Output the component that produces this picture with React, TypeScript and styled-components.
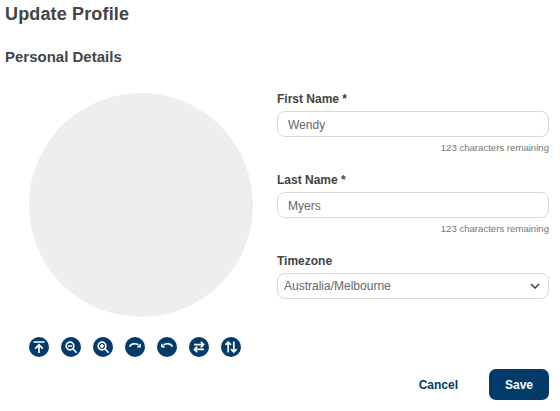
import React from "react";
import styled, { createGlobalStyle } from "styled-components";

const GlobalStyle = createGlobalStyle`
  html, body {
    margin: 0;
    padding: 0;
    background: #fff;
    font-family: "Liberation Sans", Arial, sans-serif;
  }
`;

const Page = styled.div`
  width: 560px;
  height: 411px;
  box-sizing: border-box;
  padding: 5px 11px 0 5px;
  overflow: hidden;
`;

const Title = styled.h1`
  margin: 0;
  font-size: 18px;
  line-height: 18px;
  font-weight: 700;
  letter-spacing: 0.15px;
  color: #444;
`;

const Subtitle = styled.h2`
  margin: 25px 0 0;
  font-size: 15px;
  line-height: 17px;
  font-weight: 700;
  color: #444;
`;

const Columns = styled.div`
  display: flex;
  margin-top: 27px;
`;

const AvatarColumn = styled.div`
  width: 272px;
  display: flex;
  flex-direction: column;
  align-items: flex-start;
  box-sizing: border-box;
  padding: 1px 0 0 24px;
`;

const Avatar = styled.div`
  width: 224px;
  height: 224px;
  border-radius: 50%;
  background: #eeeeee;
`;

const Tools = styled.div`
  display: flex;
  gap: 12px;
  margin-top: 20px;
`;

const ToolButton = styled.button`
  width: 20px;
  height: 20px;
  padding: 0;
  border: 0;
  border-radius: 50%;
  background: #023a69;
  display: flex;
  align-items: center;
  justify-content: center;
`;

const ToolIcon = styled.svg`
  width: 20px;
  height: 20px;
  fill: none;
  stroke: #fff;
  stroke-width: 1.7;
`;

const ArrowHead = styled.path`
  fill: #fff;
  stroke: none;
`;

const FormColumn = styled.div`
  flex: 1;
  display: flex;
  flex-direction: column;
`;

const Field = styled.div<{ $gap?: number }>`
  display: flex;
  flex-direction: column;
  margin-bottom: ${({ $gap }) => $gap ?? 0}px;
`;

const Label = styled.label`
  font-size: 12px;
  line-height: 14px;
  font-weight: 700;
  color: #444;
  margin-bottom: 5px;
`;

const TextInput = styled.input`
  box-sizing: border-box;
  width: 272px;
  height: 26px;
  padding: 2px 10px 0;
  border: 1px solid #d8d8d8;
  border-radius: 8px;
  background: #fff;
  font-family: inherit;
  font-size: 12px;
  color: #666;
  outline: none;
`;

const Helper = styled.div`
  margin-top: 5px;
  text-align: right;
  font-size: 9.6px;
  line-height: 11px;
  color: #777;
`;

const SelectBox = styled.div`
  box-sizing: border-box;
  width: 272px;
  height: 26px;
  padding: 0 8px 0 6px;
  border: 1px solid #d8d8d8;
  border-radius: 8px;
  background: #fff;
  display: flex;
  align-items: center;
  justify-content: space-between;
  font-size: 12px;
  color: #666;
`;

const Actions = styled.div`
  display: flex;
  justify-content: flex-end;
  align-items: center;
  gap: 31px;
  margin-top: 70px;
`;

const CancelButton = styled.button`
  padding: 0;
  border: 0;
  background: none;
  font-family: inherit;
  font-size: 12px;
  font-weight: 700;
  color: #023a69;
`;

const SaveButton = styled.button`
  width: 60px;
  height: 31px;
  padding: 0;
  border: 0;
  border-radius: 7px;
  background: #023a69;
  font-family: inherit;
  font-size: 12px;
  font-weight: 700;
  color: #fff;
`;

const tools: { line: string; head?: string }[] = [
  { line: "M4.5 5h11M10 16V8.5M6.2 11.6L10 7.8l3.8 3.8" },
  { line: "M9 5.2a3.8 3.8 0 1 1 0 7.6 3.8 3.8 0 0 1 0-7.6zM7 9h4M12 12l3.6 3.6" },
  { line: "M9 5.2a3.8 3.8 0 1 1 0 7.6 3.8 3.8 0 0 1 0-7.6zM7 9h4M9 7v4M12 12l3.6 3.6" },
  { line: "M4.5 9.6C6 6.8 10 5.8 13.4 7.8", head: "M15.8 6.2v4.2h-4.2z" },
  { line: "M15.5 9.6C14 6.8 10 5.8 6.6 7.8", head: "M4.2 6.2v4.2h4.2z" },
  { line: "M5 7.6h9.5M11.8 4.9l2.8 2.7-2.8 2.7M15 12.4H5.5M8.2 9.7l-2.8 2.7 2.8 2.7" },
  { line: "M7.2 15.5V5M4.4 7.8l2.8-2.8L10 7.8M12.8 4.5V15M10 12.2l2.8 2.8 2.8-2.8" },
];

const App = () => {
  return (
    <Page>
      <GlobalStyle />
      <Title>Update Profile</Title>
      <Subtitle>Personal Details</Subtitle>
      <Columns>
        <AvatarColumn>
          <Avatar />
          <Tools>
            {tools.map((tool) => (
              <ToolButton key={tool.line} type="button">
                <ToolIcon viewBox="0 0 20 20">
                  <path d={tool.line} />
                  {tool.head && <ArrowHead d={tool.head} />}
                </ToolIcon>
              </ToolButton>
            ))}
          </Tools>
        </AvatarColumn>
        <FormColumn>
          <Field $gap={20}>
            <Label>First Name *</Label>
            <TextInput defaultValue="Wendy" />
            <Helper>123 characters remaining</Helper>
          </Field>
          <Field $gap={20}>
            <Label>Last Name *</Label>
            <TextInput defaultValue="Myers" />
            <Helper>123 characters remaining</Helper>
          </Field>
          <Field>
            <Label>Timezone</Label>
            <SelectBox>
              Australia/Melbourne
              <svg width="10" height="6" viewBox="0 0 10 6" fill="none" stroke="#444" strokeWidth="1.6">
                <path d="M1 1l4 4 4-4" />
              </svg>
            </SelectBox>
          </Field>
          <Actions>
            <CancelButton type="button">Cancel</CancelButton>
            <SaveButton type="button">Save</SaveButton>
          </Actions>
        </FormColumn>
      </Columns>
    </Page>
  );
};

export default App;
